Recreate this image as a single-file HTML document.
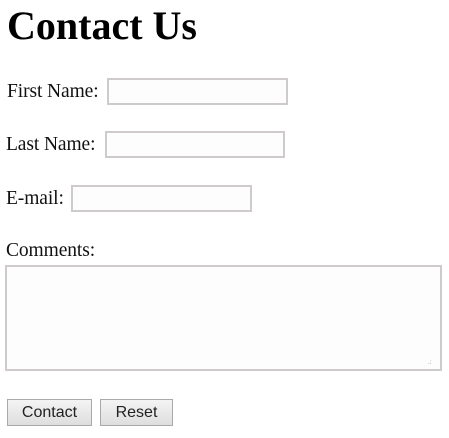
<!DOCTYPE html>
<html><head><style>
body{margin:0;background:#fff;width:449px;height:438px;position:relative;overflow:hidden;font-family:"Liberation Serif",serif;color:#111}
.a{position:absolute}
h1{position:absolute;left:7px;top:3px;margin:0;font-size:40px;font-weight:bold;color:#000;line-height:46px}
.l{font-size:19.5px;line-height:20px;letter-spacing:-0.1px}
.i{border:2px solid #cfcbcb;background:#fdfdfd;box-sizing:border-box}
.b{border:1px solid #a9a9a9;background:linear-gradient(#f4f4f4,#dedede);box-sizing:border-box;font-family:"Liberation Sans",sans-serif;font-size:16px;text-align:center;line-height:25px;color:#222}
</style></head><body>
<h1>Contact Us</h1>
<div class="a l" style="left:7px;top:82px">First Name:</div>
<div class="a i" style="left:107px;top:78px;width:181px;height:27px"></div>
<div class="a l" style="left:6px;top:135px">Last Name:</div>
<div class="a i" style="left:105px;top:131px;width:180px;height:27px"></div>
<div class="a l" style="left:6px;top:189px">E-mail:</div>
<div class="a i" style="left:71px;top:185px;width:181px;height:27px"></div>
<div class="a l" style="left:6px;top:241px">Comments:</div>
<div class="a i" style="left:5px;top:265px;width:437px;height:106px"></div>
<div class="a" style="left:428px;top:358px;font-size:7px;color:#aaa">.:</div>
<div class="a b" style="left:7px;top:399px;width:85px;height:27px">Contact</div>
<div class="a b" style="left:100px;top:399px;width:73px;height:27px">Reset</div>
</body></html>
